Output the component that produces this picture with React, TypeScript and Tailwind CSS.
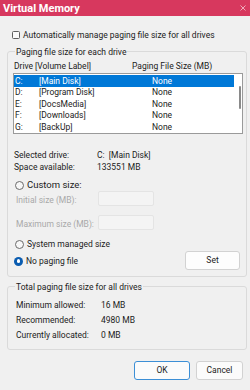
import React from "react";

const drives = [
  { letter: "C:", label: "[Main Disk]", size: "None" },
  { letter: "D:", label: "[Program Disk]", size: "None" },
  { letter: "E:", label: "[DocsMedia]", size: "None" },
  { letter: "F:", label: "[Downloads]", size: "None" },
  { letter: "G:", label: "[BackUp]", size: "None" },
];

function Radio({ checked = false }: { checked?: boolean }) {
  return checked ? (
    <span className="flex size-[9px] shrink-0 items-center justify-center rounded-full bg-[#0a5cb0]">
      <span className="size-[3.5px] rounded-full bg-white" />
    </span>
  ) : (
    <span className="size-[9px] shrink-0 rounded-full border border-[#6b6b6b] bg-[#f7f7f7]" />
  );
}

function GroupLabel({ children }: { children: React.ReactNode }) {
  return (
    <div className="-mt-[5px] ml-[2px] h-[11px] w-fit bg-[#f0f0f0] px-[1px] leading-[11px]">
      {children}
    </div>
  );
}

export default function App() {
  return (
    <div className="flex h-[390px] w-[250px] flex-col overflow-hidden bg-[#f0f0f0] font-['Roboto',sans-serif] text-[8.5px] text-[#1b1b1b]">
      {/* title bar */}
      <div className="flex h-[16px] shrink-0 items-center justify-between bg-[#d7385e] pl-[3px] pr-[4px]">
        <span className="text-[11px] font-bold leading-none text-white">Virtual Memory</span>
        <svg width="6" height="6" viewBox="0 0 6 6" className="text-[#f3c9d3]">
          <path d="M0.5 0.5 L5.5 5.5 M5.5 0.5 L0.5 5.5" stroke="currentColor" strokeWidth="0.8" />
        </svg>
      </div>

      <div className="flex flex-1 flex-col pl-[7px] pr-[3px]">
        {/* auto manage */}
        <div className="mt-[15px] flex h-[8px] items-center gap-[3px] pl-[5px]">
          <span className="size-[8px] shrink-0 rounded-[1.5px] border border-[#5f5f5f] bg-[#f9f9f9]" />
          <span className="leading-none">Automatically manage paging file size for all drives</span>
        </div>

        {/* per drive group */}
        <div className="mt-[12px] flex flex-col rounded-[3px] border border-[#dadada] pb-[6px] pl-[5px] pr-[3px]">
          <GroupLabel>Paging file size for each drive</GroupLabel>

          <div className="mt-[3px] flex h-[10px] items-center leading-none">
            <span className="ml-[1px] w-[21px]">Drive</span>
            <span className="w-[97px]">[Volume Label]</span>
            <span>Paging File Size (MB)</span>
          </div>

          <div className="mt-[2px] flex h-[61px] border border-[#9a9a9a] bg-white">
            <div className="flex flex-1 flex-col pt-[1px]">
              {drives.map((d, i) => (
                <div
                  key={d.letter}
                  className={`flex h-[11.5px] items-center leading-none ${i === 0 ? "bg-[#0078d7] text-white" : ""}`}
                >
                  <span className="w-[25px] pl-[1px]">{d.letter}</span>
                  <span className="w-[113px]">{d.label}</span>
                  <span>{d.size}</span>
                </div>
              ))}
            </div>
            <div className="flex w-[8px] justify-end pr-[1px] pt-[12px]">
              <span className="h-[23px] w-[2.5px] rounded-full bg-[#8a8a8a]" />
            </div>
          </div>

          <div className="mt-[15px] grid grid-cols-[83px_1fr] pl-[1px] leading-[12px]">
            <span>Selected drive:</span>
            <span>C:&nbsp; [Main Disk]</span>
            <span>Space available:</span>
            <span>133551 MB</span>
          </div>

          <div className="mt-[7px] flex h-[10px] items-center gap-[3px] pl-[2px]">
            <Radio />
            <span className="text-[9.5px] leading-none">Custom size:</span>
          </div>

          <div className="flex h-[16px] items-center pl-[3px] text-[#a9a9a9]">
            <span className="w-[82px] pt-[4px]">Initial size (MB):</span>
            <span className="h-[15px] w-[56px] rounded-[2px] border border-[#e4e4e4] bg-[#f4f4f4]" />
          </div>
          <div className="mt-[8px] flex h-[16px] items-center pl-[3px] text-[#a9a9a9]">
            <span className="w-[82px] pt-[4px]">Maximum size (MB):</span>
            <span className="h-[15px] w-[56px] rounded-[2px] border border-[#e4e4e4] bg-[#f4f4f4]" />
          </div>

          <div className="mt-[8px] flex h-[12px] items-center gap-[3px] pl-[2px]">
            <Radio />
            <span className="leading-none">System managed size</span>
          </div>

          <div className="mt-[1px] flex h-[19px] items-center justify-between pl-[1px] pr-[3px]">
            <div className="flex items-center gap-[3px] pt-[1px]">
              <Radio checked />
              <span className="leading-none">No paging file</span>
            </div>
            <button className="h-[19px] w-[55px] rounded-[3px] border border-[#d2d2d2] bg-[#fdfdfd] leading-none">
              Set
            </button>
          </div>
        </div>

        {/* totals group */}
        <div className="mt-[9px] flex flex-col rounded-[3px] border border-[#dadada] pb-[6px] pl-[5px]">
          <GroupLabel>Total paging file size for all drives</GroupLabel>
          <div className="mt-[5px] grid grid-cols-[85px_1fr] pl-[3px] leading-[15px]">
            <span>Minimum allowed:</span>
            <span>16 MB</span>
            <span>Recommended:</span>
            <span>4980 MB</span>
            <span>Currently allocated:</span>
            <span>0 MB</span>
          </div>
        </div>

        {/* dialog buttons */}
        <div className="mt-[11px] flex justify-end gap-[6px] pr-[4px]">
          <button className="h-[19px] w-[56px] rounded-[3px] border border-[#3c8fd6] bg-[#fbfbfb] leading-none">OK</button>
          <button className="h-[19px] w-[47px] rounded-[3px] border border-[#d2d2d2] bg-[#fbfbfb] leading-none">
            Cancel
          </button>
        </div>
      </div>
    </div>
  );
}
